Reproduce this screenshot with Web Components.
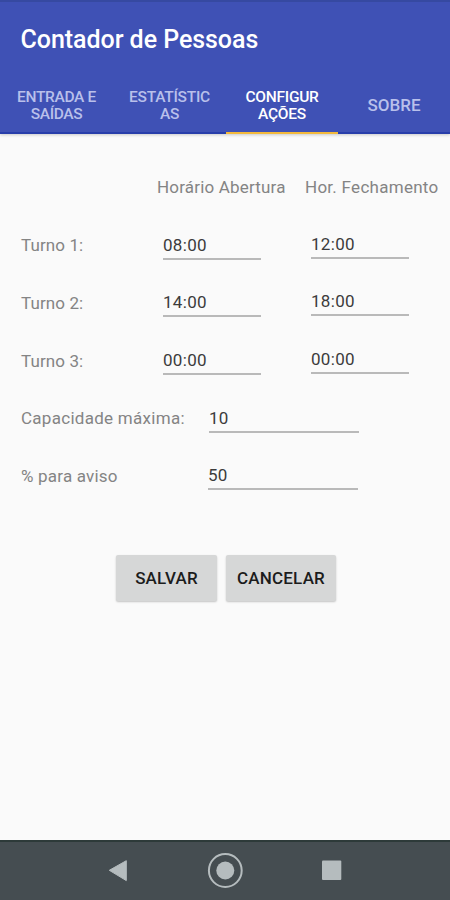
<!DOCTYPE html>
<html lang="pt-BR">
<head>
<meta charset="utf-8">
<title>Contador de Pessoas</title>
<style>
html, body { margin: 0; height: 100%; }
body { font-family: Roboto, "Liberation Sans", sans-serif; background: #fafafa; overflow: hidden; }
</style>
</head>
<body>
<app-screen>
  <app-header slot="header" title-text="Contador de Pessoas">
    <app-tab style="--ls:-.33px">ENTRADA E<br>SAÍDAS</app-tab>
    <app-tab style="--ls:-.25px">ESTATÍSTIC<br>AS</app-tab>
    <app-tab active style="--ls:-.25px">CONFIGUR<br>AÇÕES</app-tab>
    <app-tab single>SOBRE</app-tab>
  </app-header>
  <form-row style="--h:57px"><form-label style="margin-top:-1px;margin-left:157px;--ls:.18px">Horário Abertura</form-label><form-label style="margin-top:-1px;margin-left:305px;--ls:.27px">Hor. Fechamento</form-label></form-row>
  <form-row style="--h:58px"><form-label style="--ls:.1px">Turno 1:</form-label><text-field value="08:00" style="margin-left:163px"></text-field><text-field value="12:00" style="margin-left:311px;margin-top:-1px"></text-field></form-row>
  <form-row style="--h:58px"><form-label style="--ls:.1px">Turno 2:</form-label><text-field value="14:00" style="margin-left:163px;margin-top:-1px"></text-field><text-field value="18:00" style="margin-left:311px;margin-top:-2px"></text-field></form-row>
  <form-row style="--h:58px"><form-label style="--ls:.1px">Turno 3:</form-label><text-field value="00:00" style="margin-left:163px;margin-top:-1px"></text-field><text-field value="00:00" style="margin-left:311px;margin-top:-2px"></text-field></form-row>
  <form-row style="--h:57px"><form-label style="margin-top:-1px">Capacidade máxima:</form-label><text-field value="10" style="margin-left:209px;margin-top:-1px;--w:150px"></text-field></form-row>
  <form-row style="--h:89px"><form-label style="--ls:.2px">% para aviso</form-label><text-field value="50" style="margin-left:208px;margin-top:-1px;--w:149.5px"></text-field></form-row>
  <button-bar><flat-button style="--w:101px">SALVAR</flat-button><flat-button style="--w:110px">CANCELAR</flat-button></button-bar>
  <nav-bar slot="nav"></nav-bar>
</app-screen>
<script>
function define(name, html, setup) {
  const template = document.createElement('template');
  template.innerHTML = html;
  customElements.define(name, class extends HTMLElement {
    constructor() {
      super();
      this.attachShadow({ mode: 'open' }).appendChild(template.content.cloneNode(true));
    }
    connectedCallback() { if (setup) setup(this, this.shadowRoot); }
  });
}

define('app-screen', `
<style>
:host { display: flex; flex-direction: column; width: 450px; height: 900px; background: #fafafa; }
main { flex: 1; padding-top: 44px; min-height: 0; box-sizing: border-box; }
</style>
<slot name="header"></slot><main><slot></slot></main><slot name="nav"></slot>`);

define('app-header', `
<style>
:host { display: flex; flex-direction: column; height: 134px; box-sizing: border-box; background: #3f51b5;
  border-top: 2px solid #3649a1; box-shadow: 0 1px 3px rgba(0,0,0,.2); }
h1 { margin: 0; height: 75px; line-height: 76px; padding-left: 20.5px; font-size: 25px; font-weight: 500; color: #fff; letter-spacing: -.05px; }
nav { flex: 1; display: grid; grid-template-columns: 113px 113px 112px 112px; box-shadow: inset 0 -2px #283eaa; }
</style>
<h1></h1><nav><slot></slot></nav>`, (host, root) => {
  root.querySelector('h1').textContent = host.getAttribute('title-text');
});

define('app-tab', `
<style>
:host { display: flex; align-items: center; justify-content: center; text-align: center; box-sizing: border-box;
  padding-top: 1px; font-size: 15.5px; line-height: 17.5px; font-weight: 500; color: #b9c0eb; letter-spacing: var(--ls, 0); }
:host([active]) { color: #fff; border-bottom: 2px solid #f3b93c; padding-top: 3px; }
:host([single]) { font-size: 17px; padding-top: 0; }
</style>
<span><slot></slot></span>`);

define('form-row', `
<style>
:host { display: grid; grid-template: 100% / 100%; height: var(--h); }
::slotted(*) { grid-area: 1 / 1; align-self: start; justify-self: start; }
</style>
<slot></slot>`);

define('form-label', `
<style>
:host { display: block; margin-left: 21px; font-size: 17px; line-height: 20px; color: #848484; white-space: nowrap; letter-spacing: var(--ls, .28px); }
</style>
<slot></slot>`);

define('text-field', `
<style>
:host { display: block; width: var(--w, 97.5px); height: 25px; box-sizing: border-box; border-bottom: 2px solid #b9b9b9;
  font-size: 17px; line-height: 20px; color: #3c3c3c; letter-spacing: .3px; }
</style>
<span></span>`, (host, root) => {
  root.querySelector('span').textContent = host.getAttribute('value');
});

define('button-bar', `
<style>
:host { display: flex; justify-content: center; gap: 9px; padding-left: 2px; }
</style>
<slot></slot>`);

define('flat-button', `
<style>
:host { display: block; width: var(--w); }
button { display: block; width: 100%; height: 46px; padding: 0; border: 0; border-radius: 2px; background: #d6d7d7;
  box-shadow: 0 1px 2px rgba(0,0,0,.22); font: 500 17px/46px Roboto, "Liberation Sans", sans-serif; color: #1c1c1c; letter-spacing: .2px; }
</style>
<button type="button"><slot></slot></button>`);

define('nav-bar', `
<style>
:host { display: block; height: 60px; box-sizing: border-box; background: #454d51; border-top: 2px solid #2d3a39; }
svg { display: block; }
</style>
<svg width="450" height="58" viewBox="0 842 450 58" fill="#b5bcbe">
<path d="M109.3 870.3 126.3 860.7V880.6Z" stroke="#b5bcbe" stroke-width="1" stroke-linejoin="round"/>
<circle cx="225.3" cy="870.5" r="16.4" fill="none" stroke="#b5bcbe" stroke-width="2"/>
<circle cx="225.3" cy="870.5" r="9"/>
<rect x="322" y="860.5" width="19.3" height="19.5" rx="1"/>
</svg>`);
</script>
</body>
</html>
